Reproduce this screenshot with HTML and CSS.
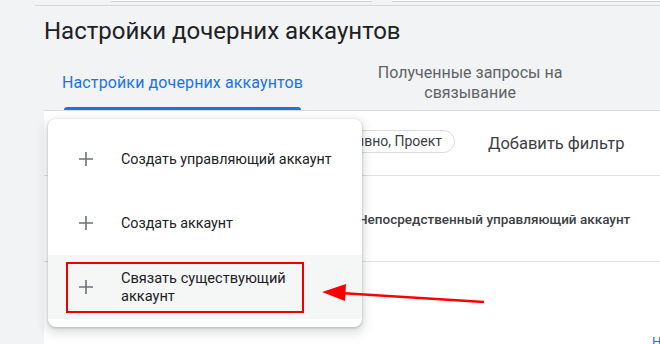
FILE: index.html
```html
<!DOCTYPE html>
<html lang="ru">
<head>
  <meta charset="UTF-8">
  <title>Настройки дочерних аккаунтов</title>
  <link rel="stylesheet" href="styles.css">
</head>
<body>
  <div class="top-strip">
    <div class="top-box top-box-a"></div>
    <div class="top-box top-box-b"></div>
  </div>
  <div class="top-line"></div>

  <div class="page">
    <h1 class="page-title">Настройки дочерних аккаунтов</h1>

    <div class="tabs">
      <div class="tab tab-active"><span class="tab-label">Настройки дочерних аккаунтов</span></div>
      <div class="tab tab-second"><span class="tab-label">Полученные запросы на связывание</span></div>
    </div>

    <div class="panel">
      <div class="filter-row">
        <div class="chip">Статус: Активно, Проект</div>
        <div class="add-filter">Добавить фильтр</div>
      </div>
      <div class="table-head">
        <div class="col-manager">Непосредственный управляющий аккаунт</div>
      </div>
      <div class="table-row">
        <div class="row-link">Н</div>
      </div>
    </div>
  </div>

  <div class="menu">
    <div class="menu-item">
      <svg class="plus" viewBox="0 0 16 16"><path d="M8 1v14M1 8h14"/></svg>
      <span class="menu-text">Создать управляющий аккаунт</span>
    </div>
    <div class="menu-item">
      <svg class="plus" viewBox="0 0 16 16"><path d="M8 1v14M1 8h14"/></svg>
      <span class="menu-text">Создать аккаунт</span>
    </div>
    <div class="menu-item menu-item-hover">
      <svg class="plus" viewBox="0 0 16 16"><path d="M8 1v14M1 8h14"/></svg>
      <span class="menu-text menu-text-wrap">Связать существующий аккаунт</span>
      <div class="highlight-box"></div>
    </div>
  </div>

  <svg class="arrow" width="660" height="344" viewBox="0 0 660 344">
    <line x1="484" y1="302" x2="340" y2="293" stroke="#f00" stroke-width="2.4"/>
    <polygon points="322,292 346,284 345,301" fill="#f00"/>
  </svg>
</body>
</html>
```

FILE: styles.css
```css
html, body {
  margin: 0;
  width: 660px;
  height: 344px;
  overflow: hidden;
}
body {
  background: #f1f3f4;
  font-family: Roboto, "Noto Sans", Arial, sans-serif;
  color: #202124;
  position: relative;
}
.top-strip {
  height: 2px;
  display: flex;
  gap: 20px;
  padding-left: 111px;
}
.top-box {
  height: 1px;
  background: #fff;
  border-bottom: 1px solid #d0d2d5;
}
.top-box-a { width: 261px; }
.top-box-b { flex: 1; }
.top-line {
  margin: 3px 0 0 35px;
  height: 1px;
  background: #d7d8da;
}
.page {
  padding-left: 44px;
  overflow: hidden;
}
.page-title {
  margin: 10px 0 0 0;
  font-size: 24px;
  line-height: 30px;
  font-weight: 400;
  color: #202124;
}
.tabs {
  margin-top: 9px;
  height: 55px;
  display: flex;
  align-items: center;
  border-bottom: 1px solid #dadce0;
}
.tab {
  font-size: 16px;
  line-height: 20px;
  color: #5f6368;
  height: 100%;
  display: flex;
  align-items: center;
  position: relative;
}
.tab-active {
  padding: 0 18px;
  color: #1a73e8;
  letter-spacing: 0.12px;
}
.tab-active::after {
  content: "";
  position: absolute;
  left: 20px;
  right: 20px;
  bottom: 0;
  height: 3px;
  background: #1a73e8;
  border-radius: 3px 3px 0 0;
}
.tab-second {
  margin-left: 45px;
  width: 208px;
  text-align: center;
}
.panel {
  background: #fff;
  height: 240px;
}
.filter-row {
  height: 64px;
  display: flex;
  align-items: center;
  border-bottom: 1px solid #e0e0e0;
}
.chip {
  margin-left: 175px;
  width: 236px;
  height: 23px;
  box-sizing: border-box;
  border: 1px solid #dadce0;
  border-radius: 12px;
  font-size: 14px;
  line-height: 21px;
  color: #3c4043;
  text-align: right;
  padding-right: 12px;
  white-space: nowrap;
  overflow: hidden;
  margin-top: -4px;
}
.add-filter {
  margin-left: 33px;
  font-size: 16.5px;
  font-weight: 400;
  color: #3c4043;
}
.table-head {
  height: 85px;
  display: flex;
  align-items: center;
  border-bottom: 1px solid #e0e0e0;
}
.col-manager {
  margin-left: 314px;
  font-size: 13.5px;
  font-weight: 500;
  color: #3c4043;
  white-space: nowrap;
}
.table-row {
  height: 80px;
  display: flex;
  align-items: flex-start;
}
.row-link {
  margin-left: 608px;
  padding-top: 72px;
  font-size: 13px;
  line-height: 15px;
  color: #1a73e8;
  white-space: nowrap;
}
.menu {
  position: absolute;
  left: 48px;
  top: 119px;
  width: 314px;
  padding: 8px 0;
  background: #fff;
  border-radius: 8px;
  box-shadow: 0 1px 3px rgba(60,64,67,0.3), 0 4px 8px 3px rgba(60,64,67,0.15);
}
.menu-item {
  height: 64px;
  display: flex;
  align-items: center;
  padding-left: 30px;
  gap: 27px;
  position: relative;
}
.menu-item-hover {
  background: #f5f6f6;
}
.plus {
  width: 16px;
  height: 16px;
  flex: none;
  stroke: #6f7276;
  stroke-width: 1.6;
  fill: none;
}
.menu-text {
  font-size: 14.3px;
  line-height: 18px;
  color: #202124;
}
.menu-text-wrap {
  font-size: 14.6px;
  max-width: 172px;
}
.highlight-box {
  position: absolute;
  left: 18px;
  top: 7px;
  width: 238px;
  height: 51px;
  box-sizing: border-box;
  border: 2px solid #ee0000;
}
.arrow {
  position: absolute;
  left: 0;
  top: 0;
}
```
